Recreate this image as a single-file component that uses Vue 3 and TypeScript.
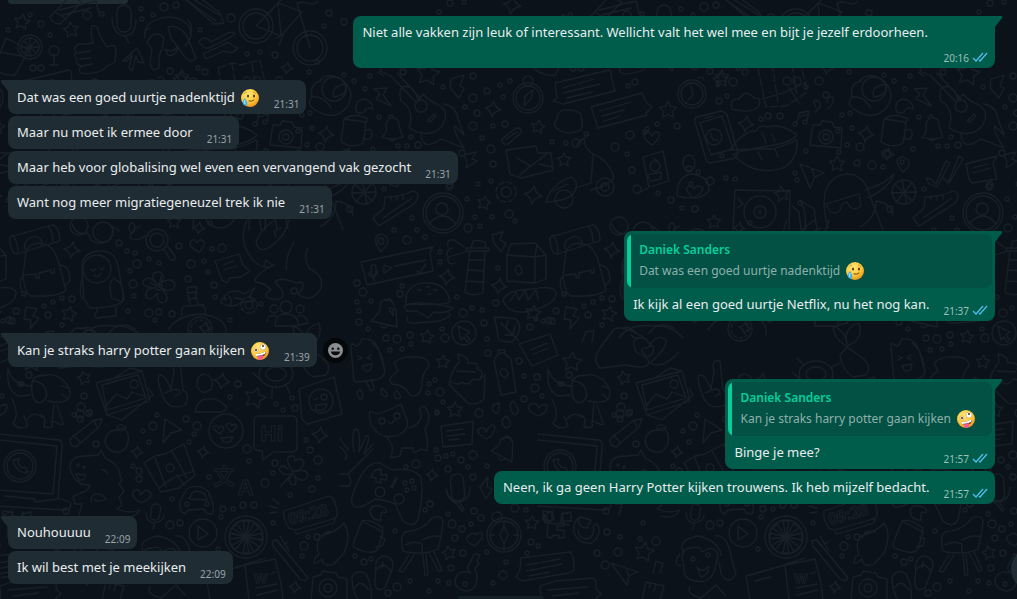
<script setup lang="ts">
type EmojiName = 'tear' | 'zany'

interface Quote {
  author: string
  text: string
  emoji: EmojiName
}

interface Message {
  id: number
  text: string
  time: string
  emoji?: EmojiName
  quote?: Quote
  reactable?: boolean
  stacked?: boolean
}

interface Group {
  id: number
  own: boolean
  messages: Message[]
}

const groups: Group[] = [
  {
    id: 1,
    own: true,
    messages: [
      { id: 1, text: 'Niet alle vakken zijn leuk of interessant. Wellicht valt het wel mee en bijt je jezelf erdoorheen.', time: '20:16', stacked: true },
    ],
  },
  {
    id: 2,
    own: false,
    messages: [
      { id: 2, text: 'Dat was een goed uurtje nadenktijd', emoji: 'tear', time: '21:31' },
      { id: 3, text: 'Maar nu moet ik ermee door', time: '21:31' },
      { id: 4, text: 'Maar heb voor globalising wel even een vervangend vak gezocht', time: '21:31' },
      { id: 5, text: 'Want nog meer migratiegeneuzel trek ik nie', time: '21:31' },
    ],
  },
  {
    id: 3,
    own: true,
    messages: [
      {
        id: 6,
        text: 'Ik kijk al een goed uurtje Netflix, nu het nog kan.',
        time: '21:37',
        quote: { author: 'Daniek Sanders', text: 'Dat was een goed uurtje nadenktijd', emoji: 'tear' },
      },
    ],
  },
  {
    id: 4,
    own: false,
    messages: [
      { id: 7, text: 'Kan je straks harry potter gaan kijken', emoji: 'zany', time: '21:39', reactable: true },
    ],
  },
  {
    id: 5,
    own: true,
    messages: [
      {
        id: 8,
        text: 'Binge je mee?',
        time: '21:57',
        quote: { author: 'Daniek Sanders', text: 'Kan je straks harry potter gaan kijken', emoji: 'zany' },
      },
      { id: 9, text: 'Neen, ik ga geen Harry Potter kijken trouwens. Ik heb mijzelf bedacht.', time: '21:57' },
    ],
  },
  {
    id: 6,
    own: false,
    messages: [
      { id: 10, text: 'Nouhouuuu', time: '22:09' },
      { id: 11, text: 'Ik wil best met je meekijken', time: '22:09' },
    ],
  },
]

// Wallpaper marks: [x, y, radius]
const dots: number[][] = [
  [41, 24, 3], [30, 15, 2], [8, 30, 2], [87, 15, 4], [50, 35, 2], [102, 14, 2], [33, 68, 3], [41, 68, 3],
  [141, 9, 2], [164, 7, 4], [153, 15, 2], [142, 19, 2], [176, 5, 3], [231, 18, 4], [170, 71, 3], [198, 68, 2],
  [205, 72, 3], [200, 30, 2], [247, 54, 2], [260, 52, 2], [275, 55, 3], [329, 13, 3], [324, 26, 2], [309, 72, 2],
  [317, 62, 2], [312, 128, 2], [320, 147, 4], [307, 145, 2], [299, 152, 2], [344, 75, 2], [354, 81, 2],
  [344, 22, 3], [370, 76, 2], [365, 89, 2], [403, 72, 3], [443, 87, 2], [473, 76, 3], [487, 91, 3], [473, 98, 4],
  [500, 85, 2], [510, 81, 2], [503, 97, 2], [465, 107, 2], [477, 113, 3], [473, 126, 4], [493, 126, 2],
  [505, 124, 3], [482, 138, 2], [491, 149, 4], [379, 117, 2], [373, 149, 2], [398, 146, 2], [407, 146, 2],
  [418, 145, 3], [411, 137, 2], [462, 153, 3], [493, 164, 3], [478, 184, 2], [491, 181, 2], [467, 199, 2],
  [449, 187, 3], [475, 217, 2], [492, 217, 2], [509, 214, 4], [450, 3, 3], [464, 2, 2], [439, 12, 2],
  [515, 221, 2], [12, 142, 2], [26, 143, 2], [36, 143, 4], [46, 134, 2], [75, 147, 4], [90, 135, 4],
  [87, 154, 2], [92, 170, 3], [97, 189, 4], [118, 193, 2], [131, 200, 3], [107, 129, 2], [117, 124, 2],
  [88, 86, 2], [95, 82, 3], [105, 132, 2], [137, 126, 3], [149, 169, 3], [158, 172, 2], [151, 184, 2],
  [170, 181, 4], [186, 178, 2], [195, 179, 2], [178, 83, 2], [193, 82, 4], [179, 101, 3], [187, 96, 2],
  [221, 119, 2], [228, 116, 3], [240, 116, 3], [257, 81, 4], [266, 87, 2], [279, 81, 4], [286, 95, 3],
  [266, 151, 2], [317, 163, 3], [332, 165, 4], [343, 167, 2], [302, 115, 2], [310, 113, 2], [346, 154, 4],
  [384, 189, 2], [350, 209, 3], [412, 218, 2], [450, 185, 3], [142, 208, 2], [155, 209, 3], [260, 203, 2],
  [255, 173, 2], [257, 180, 2], [210, 223, 2], [127, 251, 2], [135, 253, 2], [119, 243, 3], [137, 264, 4],
  [149, 259, 2], [159, 263, 2], [130, 271, 2], [133, 284, 4], [134, 296, 2], [179, 246, 3], [191, 264, 4],
  [204, 261, 2], [208, 272, 2], [212, 249, 2], [222, 248, 4], [188, 279, 3], [214, 285, 3], [215, 297, 2],
  [62, 298, 2], [72, 299, 3], [53, 302, 2], [44, 306, 2], [48, 315, 3], [62, 325, 2], [16, 311, 3], [12, 321, 3],
  [3, 321, 2], [128, 311, 2], [149, 313, 4], [159, 312, 3], [155, 320, 2], [172, 314, 3], [261, 304, 2],
  [294, 291, 3], [230, 320, 2], [20, 384, 2], [29, 375, 3], [22, 384, 2], [84, 396, 3], [81, 407, 4],
  [90, 412, 2], [74, 415, 2], [80, 419, 3], [238, 384, 3], [230, 397, 2], [276, 404, 2], [283, 410, 2],
  [295, 408, 3], [292, 398, 2], [394, 230, 2], [407, 240, 4], [417, 230, 2], [425, 237, 2], [468, 228, 4],
  [480, 226, 2], [440, 252, 2], [440, 262, 2], [357, 283, 3], [363, 292, 4], [357, 302, 2], [371, 301, 2],
  [359, 311, 2], [359, 322, 3], [368, 329, 2], [402, 286, 2], [400, 294, 3], [457, 297, 2], [463, 313, 4],
  [472, 308, 2], [482, 310, 2], [484, 323, 3], [498, 268, 2], [496, 303, 3], [386, 338, 3], [397, 339, 4],
  [410, 335, 3], [411, 344, 2], [390, 350, 2], [402, 349, 2], [442, 329, 2], [445, 338, 4], [487, 339, 2],
  [488, 353, 3], [519, 361, 3], [435, 380, 2], [429, 384, 2], [428, 393, 2], [440, 392, 4], [443, 402, 2],
  [437, 413, 2], [524, 376, 2], [537, 377, 3], [535, 388, 4], [542, 396, 2], [524, 399, 3], [479, 413, 4],
  [530, 327, 3], [536, 319, 2], [9, 320, 3], [24, 294, 2], [80, 414, 4], [89, 413, 3], [157, 415, 2],
  [143, 431, 2], [153, 426, 4], [149, 442, 2], [96, 444, 3], [186, 419, 3], [197, 426, 4], [194, 434, 2],
  [189, 442, 2], [247, 449, 4], [249, 461, 2], [306, 440, 2], [310, 450, 3], [318, 460, 4], [275, 463, 3],
  [273, 473, 2], [265, 483, 4], [312, 489, 3], [318, 478, 2], [209, 477, 2], [133, 466, 2], [139, 471, 3],
  [139, 479, 3], [172, 499, 2], [221, 517, 2], [223, 509, 3], [233, 509, 2], [243, 505, 3], [254, 505, 3],
  [290, 495, 2], [170, 525, 4], [180, 523, 3], [273, 523, 2], [218, 549, 2], [308, 537, 2], [304, 546, 4],
  [317, 537, 3], [302, 556, 2], [437, 412, 2], [436, 450, 2], [438, 458, 3], [446, 456, 2], [453, 454, 2],
  [461, 460, 3], [473, 455, 4], [448, 469, 3], [468, 467, 2], [416, 464, 4], [406, 467, 2], [487, 466, 2],
  [473, 477, 3], [430, 504, 3], [425, 510, 2], [448, 514, 2], [474, 511, 3], [481, 518, 3], [452, 524, 4],
  [462, 529, 3], [471, 524, 2], [455, 538, 3], [395, 531, 2], [463, 553, 3], [487, 552, 2], [506, 562, 2],
  [503, 575, 4], [451, 568, 3], [438, 581, 2], [449, 583, 2], [355, 556, 2], [364, 562, 3], [371, 559, 2],
  [397, 587, 4], [410, 581, 2], [429, 591, 2], [388, 593, 3], [493, 583, 2], [515, 508, 4], [526, 510, 2],
  [531, 542, 3], [538, 546, 2], [527, 553, 2], [5, 518, 2], [66, 511, 3], [67, 532, 3], [80, 537, 2],
  [78, 552, 4], [57, 553, 3], [65, 565, 4], [116, 541, 4], [100, 539, 2], [103, 523, 2],
]

// Five-pointed stars: [x, y, radius, rotation]
const stars: number[][] = [
  [22, 22, 8, 10], [71, 30, 8, -8], [182, 77, 7, 0], [428, 74, 12, 8], [538, 127, 7, 10], [24, 160, 7, 0],
  [128, 110, 9, 0], [181, 80, 8, -5], [297, 164, 8, 0], [484, 203, 7, 10], [242, 194, 8, -10], [174, 222, 7, 0],
  [69, 314, 8, 12], [84, 378, 7, -12], [443, 362, 7, 5], [427, 337, 7, 8], [455, 410, 8, 0], [32, 362, 10, 5],
  [255, 398, 11, 15], [449, 553, 7, -12], [532, 523, 7, 5], [104, 552, 10, 10], [533, 313, 8, 10],
]

// Four-pointed sparkles: [x, y, radius]
const sparkles: number[][] = [
  [287, 68, 6], [326, 134, 8], [512, 5, 9], [493, 109, 8], [533, 195, 9], [206, 124, 8], [348, 154, 6],
  [72, 250, 8], [499, 286, 8], [447, 277, 8], [222, 381, 8], [320, 435, 8], [137, 452, 6], [203, 452, 6],
  [295, 587, 6], [432, 475, 6], [205, 328, 6], [199, 228, 6],
]

const starPath = (r: number): string => {
  const points: string[] = []
  for (let i = 0; i < 10; i++) {
    const radius = i % 2 === 0 ? r : r * 0.5
    const angle = (Math.PI / 5) * i - Math.PI / 2
    points.push(`${(Math.cos(angle) * radius).toFixed(1)} ${(Math.sin(angle) * radius).toFixed(1)}`)
  }
  return `M${points.join('L')}Z`
}

const sparklePath = (r: number): string => {
  const k = r * 0.2
  return `M0 ${-r}Q${k} ${-k} ${r} 0Q${k} ${k} 0 ${r}Q${-k} ${k} ${-r} 0Q${-k} ${-k} 0 ${-r}Z`
}
</script>

<template>
  <main class="chat">
    <svg class="wallpaper" aria-hidden="true">
      <defs>
        <g id="doodles" class="doodles">
          <circle v-for="(d, i) in dots" :key="'d' + i" :cx="d[0]" :cy="d[1]" :r="d[2]" />
          <path v-for="(s, i) in stars" :key="'s' + i" :d="starPath(s[2])" :transform="`translate(${s[0]} ${s[1]}) rotate(${s[3]})`" />
          <path v-for="(s, i) in sparkles" :key="'k' + i" :d="sparklePath(s[2])" :transform="`translate(${s[0]} ${s[1]}) rotate(8)`" />

          <!-- eraser, microphone, pencil -->
          <path d="M50 17L70-4L82 2L60 24Q51 23 50 17ZM55 12L66 19" />
          <rect x="117" y="5" width="14" height="27" rx="7" /><path d="M112 18Q113 34 124 36Q136 35 136 20M125 36L129 43" />
          <path d="M184-2L214 24L224 23L219 12L192-8M189 2L216 21M193-1L219 15" />
          <!-- thumb, hidden face, arrow, wrench -->
          <path d="M76 46Q78 43 86 44L93 43Q90 31 92 26Q98 24 100 36L107 47Q116 43 116 50L115 62Q108 65 101 71Q84 76 80 72Q78 67 82 66Q74 64 77 59Q72 54 77 53Q73 49 76 46ZM79 53L90 51M79 59L91 58M82 66L92 64" />
          <path d="M145 38Q143 24 158 19Q175 13 187 24Q196 34 185 46M147 42Q155 28 164 38L162 49Q158 56 159 68Q151 73 150 62L152 50ZM168 27Q178 24 187 36Q190 44 196 58Q190 66 182 53L171 38ZM165 49Q172 54 178 46Q176 57 168 55ZM145 38Q143 30 150 28M188 20Q194 27 190 34" />
          <path d="M123 61L137 48L144 63L138 62L136 56L132 71L129 68L132 55L127 61ZM199 42Q202 36 208 39L211 42L224 35Q233 30 235 34L227 39L211 47Q205 51 199 42ZM203 54L221 46Q229 40 232 45L238 48Q232 55 224 51L206 59Z" />
          <!-- drinks -->
          <circle cx="30" cy="47" r="12" /><circle cx="30" cy="47" r="9" /><path d="M30 38V56M21 47H39M24 41L36 53M24 53L36 41M6 38L29 50L15 75Q6 77-6 69ZM-1 52L22 56M54 54V64M50 65H58" /><circle cx="54" cy="51" r="5" />
          <!-- bicycle -->
          <circle cx="256" cy="26" r="17" /><circle cx="256" cy="26" r="13" /><circle cx="310" cy="48" r="17" /><circle cx="310" cy="48" r="13" />
          <path d="M256 26L278 3L302 12L281 36ZM278 3L281 36M310 48L297 3L303 2Q315 6 318 1M257 25L281 0L274-3M277 38L283 35L279 45" />
          <!-- map and blossom -->
          <path d="M218 68L232 63L241 65L260 60L267 92L246 106L226 107ZM232 63L238 102M252 64L257 96" stroke-dasharray="8 3" /><path d="M222 99L243 93L267 82M249 88L259 103" /><circle cx="247" cy="81" r="4" />
          <path d="M319 82Q326 71 341 79Q357 91 347 107Q336 120 321 113Q304 106 312 97Q323 95 331 108M312 97Q309 84 321 81" /><circle cx="334" cy="89" r="12" /><path d="M334 97Q330 86 346 84Q348 95 334 97Z" />
          <!-- quotes, note, camera -->
          <path d="M276 107Q271 98 278 101Q284 105 275 112M288 103Q285 96 292 97Q296 101 288 109M257 123L259 113L269 111L267 121M259 117L268 114" /><circle cx="255" cy="124" r="2" /><circle cx="265" cy="122" r="2" />
          <path d="M273 125L280 125L282 121L292 122L294 127L302 128L301 148L270 145Q271 135 273 125Z" /><circle cx="286" cy="137" r="7" /><circle cx="286" cy="137" r="3" /><circle cx="298" cy="131" r="2" />
          <!-- mug, croissant, bell, bolts -->
          <path d="M344 119L365 122Q367 124 363 143Q353 149 341 142ZM344 119Q354 112 368 119L365 124M364 131Q373 126 372 136Q370 141 363 138" /><path d="M356 110Q355 99 365 99Q373 102 373 109Q366 106 364 112Q357 115 356 110Z" />
          <path d="M382 137Q388 133 386 124Q390 114 398 120Q400 131 403 137Q393 141 382 137ZM388 118Q391 112 394 118M389 139Q393 143 396 138M374 89L387 88L383 95L391 106L376 99L380 94ZM451 79L464 75L460 86L464 88L459 98L450 88ZM464 155L476 152L472 159L477 161L466 168L467 162ZM492 235L503 232L500 240L506 243L501 252L494 243ZM26 307L37 309L33 316L39 318L30 329L31 320L24 319ZM484 482L488 477L487 487L492 489L486 499L480 487Z" />
          <!-- guitar -->
          <circle cx="421" cy="106" r="6" /><path d="M416 102L391 76M421 99L397 73M391 76L380 71L381 66L387 63M384 76L378 72M418 100Q414 84 403 87Q398 90 401 101Q415 109 409 128Q430 140 442 126Q451 111 437 104Q429 101 423 94ZM427 121L434 114L436 116L430 122ZM444 104Q456 106 458 119L464 135L455 126Q452 130 464 148L441 139Q422 152 421 134" />
          <!-- compass, blob, clip -->
          <circle cx="528" cy="98" r="15" /><circle cx="528" cy="98" r="12" /><circle cx="528" cy="81" r="5" /><path d="M524 106L525 96L533 90L531 99Z" />
          <path d="M17 119Q17 109 29 110Q43 111 41 118Q46 132 33 132Q28 135 19 130Q11 125 17 119ZM502 139L516 128Q523 128 521 133L508 144Q501 145 502 139ZM506 139L517 132" />
          <!-- chat bubbles -->
          <path d="M15 83L69 70Q72 71 71 76L75 91L23 104L13 101L17 98ZM23 88L54 79M23 93L60 84M27 98L52 92M51 107L102 93L106 102L112 107L106 113L107 115L58 128ZM60 111L91 102M62 116L84 110M64 121L80 116" />
          <path d="M59 10L96 1L99 14M62 15L91 8M506 150L536 146L538 153L551 153L553 170L521 178L510 174ZM517 158L531 166L548 153M520 175L530 166M552 167L539 164" />
          <!-- heart, passport -->
          <path d="M112 145Q101 138 105 133Q109 130 112 136Q114 130 119 133Q121 138 112 145ZM103 157L123 151L129 181L109 187ZM107 175L121 172V179L111 181Z" /><circle cx="115" cy="166" r="5" /><path d="M113 158L118 161M97 194L108 188" />
          <!-- scooter, gears -->
          <path d="M6 202Q11 184 31 177Q40 182 34 193Q27 201 6 202ZM13 191L28 184M35 188L51 183L53 154Q44 148 44 138L37 145M38 142L50 134M53 154Q69 160 74 178Q66 187 51 190" /><circle cx="24" cy="199" r="9" /><circle cx="65" cy="187" r="9" /><circle cx="65" cy="187" r="4" />
          <circle cx="506" cy="192" r="10" stroke-dasharray="5 3" /><circle cx="506" cy="192" r="5" /><circle cx="249" cy="305" r="8" stroke-dasharray="4 2" /><circle cx="249" cy="305" r="4" />
          <!-- ball, shoe, avatar -->
          <circle cx="364" cy="192" r="12" /><path d="M355 184L372 201M372 183L356 202M362 180L367 204M376 192L352 193M373 218L384 208L385 197Q400 197 413 191Q423 194 414 204L379 226ZM383 218L412 198M391 200V196M397 200V196M403 199V195" />
          <circle cx="443" cy="213" r="20" /><circle cx="443" cy="213" r="17" /><circle cx="442" cy="209" r="6" /><path d="M429 224Q443 208 456 224" />
          <!-- watch, cloud, phone, lips -->
          <circle cx="152" cy="94" r="14" /><circle cx="152" cy="94" r="11" /><path d="M151 86L153 95L148 100M158 78Q163 75 164 80" />
          <path d="M192 109Q189 98 199 99Q206 88 214 98Q223 98 218 107Q210 114 192 109ZM157 117L181 111Q187 112 188 118L198 153Q197 158 191 159L170 163Q166 162 165 156L155 122Q154 118 157 117ZM160 123L182 116L193 149L171 155ZM165 118L173 116" /><circle cx="174" cy="137" r="8" /><circle cx="182" cy="156" r="2" /><path d="M171 133Q171 141 178 140" />
          <path d="M190 150Q204 130 216 131Q220 124 227 127Q242 123 257 135Q252 142 234 145L212 149ZM193 154Q208 148 232 149Q249 144 257 140Q258 160 243 168Q213 177 193 154M222 132L226 143M232 134L235 142M218 152L222 160M235 149L238 157" />
          <!-- plane, pin, ticks, card -->
          <path d="M260 164L284 173L275 177L270 188ZM271 168L275 177M363 172Q351 158 363 157Q375 162 363 172ZM386 178L391 179L396 184L406 161L410 163L397 187L389 184ZM403 178L408 183L419 156L423 159L409 183" /><circle cx="362" cy="162" r="2" />
          <path d="M426 164L457 156L453 163L457 179L432 183L429 179ZM433 168L447 164M433 173L450 168" />
          <!-- hooded friend, turntable, heart badge -->
          <path d="M288 228Q276 183 301 175Q323 170 330 196L343 230M325 190Q345 184 354 174Q350 187 328 198M286 204L319 194L321 206Q312 213 307 202L302 204Q300 216 290 212ZM265 230Q267 211 260 200L274 209L277 230M320 227Q336 218 336 201Q351 203 353 215" />
          <path d="M193 230L195 190L250 191L249 230M252 206L259 212L261 230M198 198L203 204L197 208" /><circle cx="220" cy="212" r="16" /><circle cx="220" cy="212" r="6" /><circle cx="220" cy="212" r="1" />
          <path d="M137 194Q138 174 153 174Q170 177 169 191Q160 202 137 196ZM153 198Q143 188 148 187Q151 184 154 189Q157 184 163 188Q162 194 153 198" /><ellipse cx="149" cy="163" rx="6" ry="8" />
          <!-- rolled mat, backpack, magnifier -->
          <path d="M10 237L52 225Q58 225 60 238Q60 242 56 242L17 254Q10 253 10 237ZM12 235Q17 238 18 252M48 226Q53 232 53 242M25 249Q22 240 35 236Q44 239 41 245M26 251Q31 240 48 245Q57 251 60 268L66 290Q60 297 31 296Q25 294 23 276ZM25 275L36 274V278H39V273L51 270V273H54V268M60 265Q70 266 70 281L65 286M23 276Q18 281 22 292L28 294" />
          <circle cx="157" cy="240" r="11" /><circle cx="157" cy="240" r="7" /><path d="M164 250L171 260Q176 261 175 256L168 247M72 224Q76 236 88 233Q90 244 103 243Q115 240 112 226L119 231M140 226Q131 230 130 238Q138 242 145 236" /><circle cx="79" cy="226" r="9" /><circle cx="103" cy="232" r="10" /><ellipse cx="132" cy="228" rx="3" ry="5" />
          <!-- penguin, flower, heart -->
          <path d="M82 272Q80 253 98 251Q115 250 118 266L124 299Q120 308 90 308L84 299ZM83 278Q78 287 82 299M114 278Q107 283 112 298L122 302Q125 296 121 284ZM97 308V312Q93 314 96 318L116 316V307M91 269Q94 273 96 268M100 268Q102 272 104 267M94 275Q98 279 101 273" /><circle cx="97" cy="269" r="14" />
          <path d="M156 283Q148 272 160 272Q166 276 161 283Q172 276 175 285Q174 292 163 290Q170 298 165 302Q157 305 157 293Q151 302 146 297Q145 288 154 288Q139 286 144 280Q150 275 156 283ZM159 287L150 283M159 287L161 276M159 287L168 291" /><circle cx="159" cy="287" r="3" /><path d="M199 252Q187 246 191 241Q195 238 197 243Q201 237 204 242Q205 247 199 252Z" />
          <!-- note card, fish, snake -->
          <path d="M215 261L239 254L243 265L250 271L241 277L230 278L227 283L222 280ZM223 265L234 261M224 270L237 266M220 302Q231 285 244 294L255 288L249 297L255 301L242 302Q231 310 220 302ZM229 296Q233 301 230 305M235 298L242 299" /><circle cx="225" cy="299" r="1" />
          <path d="M247 220Q239 238 248 253Q260 273 274 265Q254 275 255 282Q266 283 271 290Q260 296 271 299Q286 302 282 290L275 282Q281 276 296 283Q306 280 302 289L298 294Q310 304 320 290Q326 277 310 269Q302 258 308 248M256 242Q261 228 275 220M256 242Q259 254 270 247Q285 237 289 220M264 266L266 260L272 265M276 237L274 231L281 228M286 270Q286 254 294 242" />
          <!-- submarine, people -->
          <path d="M168 330Q177 315 201 314Q229 318 226 335M182 316Q180 305 188 306L203 305Q207 311 205 314M190 305L187 289Q188 286 197 287V293L195 295L198 304M188 293L196 292M189 299L197 298M79 338Q90 323 114 326Q132 325 143 338" /><circle cx="200" cy="329" r="12" /><circle cx="200" cy="329" r="9" stroke-dasharray="3 3" />
          <circle cx="286" cy="307" r="6" /><circle cx="274" cy="309" r="4" /><circle cx="300" cy="309" r="4" /><path d="M275 326Q275 314 286 314Q299 315 298 326ZM267 321Q268 314 276 316M298 316Q306 314 308 323L299 325" />
          <!-- voice note, lighthouse, carton -->
          <path d="M361 262L433 247L430 253L433 271L367 285ZM384 265L384 273L392 268ZM395 266L426 260M368 273Q374 282 378 271M374 277V281M417 271L420 273L424 266M422 270L426 264M381 252Q370 237 381 234Q395 238 381 252Z" /><circle cx="381" cy="241" r="3" /><rect x="371" y="265" width="5" height="10" rx="2" />
          <path d="M470 251L465 292Q473 297 483 293L485 252M468 270L484 271M470 260L485 260M467 281L483 282M466 251H489V248H466ZM471 248L473 241Q479 239 486 243L485 248M455 263Q447 266 448 257Q458 254 465 252M447 256Q446 249 453 248M448 247Q446 239 454 240L464 247" />
          <path d="M507 255L511 244L535 243L546 255V279L535 283L507 281ZM507 255L535 257V282M535 257L537 245M535 257L546 255M519 275Q511 269 519 265Q525 272 519 275Z" />
          <!-- bell, burger, bread, leaf, cursor -->
          <path d="M371 321Q383 310 380 303Q387 296 393 303L396 311L397 327ZM386 301Q389 295 393 303M381 326Q385 330 388 325M391 312Q386 305 393 309V316ZM406 296Q411 282 428 283Q447 283 450 302Q440 306 406 304ZM404 306Q417 299 453 308Q447 314 434 312L428 318L417 311H407ZM408 316Q404 324 416 323L439 321Q454 316 449 313M418 290H421M426 287H429M434 290H437M428 294H431" />
          <path d="M503 301Q505 290 532 289Q553 285 556 292Q557 302 540 308Q511 319 503 301ZM510 301L516 292L519 300L525 290L528 300L536 290L538 299M494 317Q505 317 516 319Q525 329 512 342Q499 342 498 338Q497 326 494 317ZM501 323L519 341M506 329L508 321M513 335L505 335M513 334L515 326" />
          <circle cx="464" cy="333" r="12" /><path d="M458 326L470 332L466 335L470 340L467 342L464 337L461 340Z" />
          <!-- card, notes, heart hands -->
          <path d="M519 344L550 334L558 355L532 366ZM531 350L547 343M533 354L549 348M42 342L46 332L54 331L52 342M60 368Q52 360 60 348L74 329Q84 325 103 337Q95 340 91 335M60 368Q77 366 86 365Q108 370 109 362Q107 356 97 353Q90 341 98 338Q106 336 110 345Q117 333 126 340Q127 348 110 363Q123 370 139 352M83 329Q88 324 96 333M109 333Q120 319 135 329M107 357Q97 347 107 348Q117 342 112 354Z" />
          <!-- ice lolly, splat, cupcake, bottle -->
          <path d="M354 381L351 348Q350 342 355 345Q358 349 362 339Q376 337 380 354L385 371Q384 379 374 380L357 382ZM366 380L370 390Q374 391 374 388L371 379M358 356L362 358L358 360M371 355L367 358L371 359M362 366L372 364Q371 374 364 370ZM372 343Q381 349 384 365" />
          <path d="M394 363Q402 356 412 357Q429 356 429 366Q421 375 422 386Q419 399 410 395Q405 385 392 384Q386 379 398 371ZM449 384Q451 371 459 362L458 354Q468 356 468 363Q480 362 477 369Q486 371 479 380L485 375L484 399Q477 406 468 403Q457 393 449 384ZM451 382Q459 386 462 382Q468 387 473 379L479 380M457 371L475 372M494 361Q497 352 504 353L511 359L516 392L501 395ZM498 353V350L505 350V354M505 378Q496 373 503 368Q512 373 505 378Z" />
          <!-- dog, photo, peace sign, person, ring -->
          <path d="M8 369Q6 392 19 396L30 395M8 369Q13 385 31 386M32 382Q33 375 47 375Q53 373 63 380Q74 391 68 399Q63 404 48 401M32 382Q36 379 44 386Q51 399 39 403Q30 400 32 382ZM62 386L68 388M62 394L67 398M12 399Q20 415 13 423Q19 431 28 426L24 416M41 415Q47 417 44 427Q55 429 52 423L54 404M27 419Q34 411 42 417M53 421Q65 427 63 423L57 405" />
          <path d="M96 383L142 371L150 401L107 415ZM102 385L138 375L146 398L107 410ZM106 406L116 394L127 399L132 392L146 397M113 379L130 368L142 371M149 389L153 395L122 420L108 415" /><circle cx="134" cy="384" r="4" />
          <path d="M162 394Q155 376 161 375Q165 375 171 389L174 372Q171 358 180 361L183 390Q191 395 185 405Q168 412 162 394ZM165 393Q180 385 180 394L175 396M195 412Q198 398 209 399Q216 397 226 406Q228 410 221 412ZM197 385Q197 374 205 374Q215 377 211 389Q201 397 197 385Z" />
          <ellipse cx="276" cy="374" rx="17" ry="13" /><ellipse cx="276" cy="374" rx="10" ry="7" /><path d="M260 379L253 373M264 365L257 358M292 367L300 363M286 385L290 394M272 387V398" />
          <path d="M299 389L334 377L342 414L307 424L302 419ZM300 355Q302 370 313 377L326 375Q333 365 321 357L307 347ZM306 346Q293 338 293 326Q306 331 307 344Q303 328 319 323Q324 340 307 346" /><circle cx="321" cy="401" r="12" /><path d="M314 400L318 398M316 405L327 404Q326 412 316 410Z" /><circle cx="324" cy="397" r="3" />
          <!-- pencil, apple, laptop, dinosaur -->
          <path d="M70 439L94 420L102 419L99 427L76 447Q69 446 70 439ZM73 435L80 442M94 420L97 427M118 430Q124 425 128 434Q130 449 119 452Q108 453 105 442Q106 430 118 430ZM117 430Q117 421 126 427Q124 432 118 430" />
          <path d="M-2 434L59 440Q63 441 62 448L58 498L70 502Q73 509 64 510L-2 506M-2 440L57 446L53 494L-2 490M5 496L35 499V502L58 499M12 511L4 515L5 523L14 519ZM23 512L20 523L29 525" /><circle cx="20" cy="466" r="16" /><circle cx="20" cy="466" r="13" /><path d="M13 460Q17 475 28 472L25 467L22 468L18 463L19 459Z" />
          <path d="M70 468Q69 456 86 456L98 455L101 450L105 458Q120 465 120 476L122 480L119 484L124 491L119 497L122 505L117 509Q130 514 140 510Q134 520 121 516M70 468Q72 478 81 484L90 485Q88 492 80 493L73 497L75 504L82 504L79 515M91 502Q91 491 102 495L106 499Q97 503 94 499M76 474L86 475Q85 481 79 480ZM102 470Q106 469 107 473" /><circle cx="78" cy="465" r="1" /><circle cx="84" cy="467" r="1" />
          <!-- small plane, folded map, heart eyes, greeting bubble -->
          <path d="M165 419L182 430L171 433L163 443ZM144 463L155 456L165 454L184 444L195 475L179 488L161 492ZM155 458L166 487M172 451L187 478M159 488L173 478L194 471M177 475L184 485" /><circle cx="170" cy="468" r="4" />
          <circle cx="226" cy="431" r="17" /><path d="M220 434Q211 428 214 426Q217 424 219 428Q223 424 224 429ZM232 432Q224 426 227 424Q230 422 232 426Q235 422 237 426ZM221 438L233 437Q230 445 224 442ZM257 416H293Q297 417 297 421V448Q296 452 292 452H273L263 460L262 451L256 450Q253 448 254 444V420Q254 417 257 416Z" />
          <text x="260" y="441" class="outlined">Hi</text>
          <!-- translate card, clover, car -->
          <text x="213" y="484" class="outlined">文</text><text x="238" y="495" class="outlined">A</text>
          <path d="M293 472Q284 459 290 456Q295 455 295 461Q302 456 304 463Q302 471 293 472Q308 468 308 476Q303 485 294 475Q299 486 292 485Q286 480 293 473Q282 477 279 469Q282 463 288 469M293 473L280 487" />
          <path d="M180 501L187 489Q197 483 208 491L212 501Q215 509 212 514L206 513L204 509L188 510L185 514Q179 513 180 501ZM189 499L192 493Q198 489 205 494L207 500ZM141 503Q128 495 135 490Q140 489 141 495Q146 486 151 494Q151 499 141 503Z" /><circle cx="187" cy="504" r="2" /><circle cx="207" cy="504" r="2" />
          <!-- small microphone, play, orange, clock -->
          <rect x="151" y="504" width="9" height="16" rx="4" transform="rotate(8 155 512)" /><path d="M146 513Q147 523 154 523Q163 522 164 515M154 524L153 529" />
          <circle cx="203" cy="533" r="14" /><path d="M198 526L198 540L208 534Z" /><circle cx="246" cy="537" r="21" /><circle cx="246" cy="537" r="17" /><path d="M246 537L243 521L249 521ZM246 537L254 523L259 528ZM246 537L262 533V540ZM246 537L259 547L254 552ZM246 537L249 553L243 553ZM246 537L235 550L231 546ZM246 537L230 539V533ZM246 537L232 528L237 524Z" />
          <path d="M284 511L329 496Q334 496 337 510Q338 518 333 519L295 530L289 528Q282 517 284 511ZM295 532L297 534L334 523L335 519M273 499L279 504M269 506L277 508M270 513L277 512" />
          <text x="290" y="525" class="outlined digits" transform="rotate(-15 290 525)">09:28</text>
          <!-- toothbrush, monkey, journal, teapot -->
          <path d="M272 541L277 540L308 578L305 581L300 579L273 546ZM276 539L281 546M280 536L289 551M284 544L288 542M320 536Q335 533 344 523Q352 535 344 553L334 564Q323 568 322 559Q310 569 316 556L319 555Q315 545 320 536ZM322 538Q325 529 335 532" />
          <path d="M144 553Q136 540 158 536Q178 540 181 555M144 566Q138 548 152 548Q160 545 162 552Q175 543 178 556L174 572Q168 584 157 581Q142 580 144 566M140 554Q132 565 141 566M176 536Q188 534 192 561L196 574Q188 587 181 573L179 562M157 567Q162 574 169 566Q168 576 161 577ZM150 587Q146 594 161 598L176 585L185 595" /><circle cx="153" cy="559" r="2" /><circle cx="168" cy="555" r="2" />
          <path d="M210 600L206 576L245 565L275 559L281 583L283 600M245 565L249 600M270 574L275 572M215 581L231 577M256 588L277 584M257 595L278 590M240 566L265 558" />
          <text x="254" y="583" class="outlined digits">w</text>
          <path d="M313 577L321 575L323 571L336 573L338 577L347 579V600H311Z" /><circle cx="328" cy="588" r="9" /><circle cx="328" cy="588" r="4" />
          <!-- cat, card, drops, hearts -->
          <path d="M372 426Q368 418 370 411L377 414L389 410L401 404L405 415Q412 428 400 434Q382 442 372 426ZM386 436L392 445Q393 456 390 458L400 456L402 448L413 448Q412 456 421 449L427 451Q429 444 425 429Q433 415 424 406Q417 408 421 413Q422 424 409 428M388 422L391 424L395 420" /><circle cx="382" cy="421" r="3" /><circle cx="397" cy="416" r="3" />
          <path d="M441 426L470 422L473 421L472 444L443 447ZM447 431L463 429M447 436L465 434M449 440L459 439M487 439Q474 433 480 428Q486 427 486 432Q492 421 495 427Q494 435 487 439ZM495 413Q488 406 499 403Q500 415 495 413ZM514 415Q507 405 513 401Q523 412 514 415ZM506 428Q498 422 506 416Q515 426 506 428ZM538 416Q523 409 531 404Q538 402 538 408Q547 401 547 408Q545 414 538 416ZM360 399Q354 393 360 389Q366 399 360 399ZM385 397Q379 393 382 388Q391 396 385 397ZM397 399Q391 394 397 391Q404 399 397 399Z" />
          <path d="M491 451Q501 445 501 439Q508 434 513 442Q512 454 512 462ZM503 439Q508 433 512 440M498 457Q501 462 505 459" />
          <!-- hand, game controller, big microphone -->
          <path d="M340 447Q350 455 345 460M340 474H348Q353 482 349 486H340M348 474L373 449M348 450L340 438M354 452Q351 430 356 429Q361 430 359 452L366 436Q370 434 368 442L364 454L373 444" />
          <path d="M356 486Q366 462 379 463Q386 466 392 470Q413 467 421 477Q424 497 418 519Q414 529 403 521L395 504Q387 500 375 499Q363 508 355 507Q348 503 356 486ZM375 470L381 469V475L387 475L386 480L380 479L381 483L376 482V478L371 477L373 473ZM397 478L393 487L391 487L395 479Z" /><circle cx="380" cy="492" r="5" /><circle cx="399" cy="499" r="5" /><circle cx="405" cy="483" r="2" /><circle cx="412" cy="481" r="2" /><circle cx="407" cy="490" r="2" /><circle cx="414" cy="488" r="2" />
          <rect x="451" y="474" width="13" height="27" rx="6" transform="rotate(-5 457 487)" /><path d="M446 488Q449 502 459 502Q470 500 470 487M446 488Q447 500 457 504L463 512M460 503L464 510" />
          <!-- mug, chair, compass, heart, key -->
          <path d="M362 521L383 532L378 549Q373 556 355 548Q352 546 354 541ZM362 521Q370 518 383 528L382 533M380 537Q388 537 382 546L376 547M370 512Q371 502 385 508Q389 514 383 512Q380 512 381 520Q372 521 370 512Z" />
          <path d="M403 551Q399 537 405 532Q424 530 432 518Q442 514 443 522Q442 536 438 549Q426 555 406 552ZM405 545Q414 540 422 544V552M422 540Q433 534 441 537M409 555L399 571L403 572L414 555M423 554L425 576L428 575L426 554M429 553L439 572L442 570L434 552" />
          <circle cx="504" cy="535" r="17" /><circle cx="504" cy="535" r="14" /><circle cx="497" cy="517" r="5" /><path d="M504 526L500 535L504 544L508 535ZM504 522V525M504 545V549M491 535H494M514 535H518M475 546Q463 541 468 536Q475 531 476 535Q483 528 482 538Z" />
          <path d="M471 573Q465 569 470 563L474 554L480 555L477 561L479 564L475 568L477 576Q477 590 467 591Q455 590 455 580Q458 569 471 573Z" /><circle cx="465" cy="584" r="2" />
          <!-- flip flops, bubbles, notebook -->
          <path d="M376 563Q379 554 388 557Q396 561 391 572L385 588Q375 593 375 582ZM377 569Q384 560 391 572M383 562L382 568M352 577Q358 568 366 574Q373 587 371 600M352 577Q352 591 358 600M355 588Q360 578 369 590" />
          <path d="M521 558L570 552Q574 554 574 570L569 573L522 581L516 577L520 570ZM527 565L560 559M527 571L562 564M529 576L549 572M540 586L556 581L593 578Q597 580 596 589L601 594L594 600H541ZM548 590L587 587M553 596L578 593" />
          <path d="M3 511L12 512V521L3 520ZM22 514L31 512V521L23 521ZM8 523L17 524L23 522L24 526H17V530H24V538H19V535L12 536V538L7 537Z" />
          <path d="M40 517L51 520L47 528L42 527Q36 523 40 517Q32 522 34 533Q39 545 52 543Q63 534 57 524L53 526Q56 534 48 539Q38 539 38 530M71 563L98 572L89 576L87 585ZM86 568L89 576M106 582L124 586L120 600M106 582L102 600M109 588L111 583M114 591L116 584M113 573L116 561L123 563L120 573" />
        </g>
        <pattern id="wall" width="540" height="600" patternUnits="userSpaceOnUse">
          <use href="#doodles" x="-540" />
          <use href="#doodles" />
          <use href="#doodles" x="540" />
        </pattern>
        <radialGradient id="skin" cx="40%" cy="30%" r="75%">
          <stop offset="0" stop-color="#ffe878" />
          <stop offset="0.6" stop-color="#fdc83a" />
          <stop offset="1" stop-color="#e98b1c" />
        </radialGradient>
        <symbol id="emoji-tear" viewBox="0 0 20 20">
          <circle cx="10" cy="10" r="9" fill="url(#skin)" />
          <path d="M4 6Q5 4 7 4M13 4Q15 4 16 6" fill="none" stroke="#d69a2c" />
          <ellipse cx="8" cy="8" rx="1" ry="1.6" fill="#583414" />
          <ellipse cx="14" cy="8" rx="1" ry="1.6" fill="#583414" />
          <path d="M9 13Q12 14 14 12" fill="none" stroke="#754010" stroke-linecap="round" />
          <path d="M5 10Q8 14 7 17Q5 19 3 16Q2 13 5 10Z" fill="#43afe5" />
          <path d="M5 12Q4 14 5 16" fill="none" stroke="#b7e9fa" />
        </symbol>
        <symbol id="emoji-zany" viewBox="0 0 20 20">
          <circle cx="10" cy="10" r="9" fill="url(#skin)" />
          <circle cx="13" cy="6" r="3" fill="#fff" stroke="#c78d34" stroke-width=".5" />
          <circle cx="13" cy="5" r="1" fill="#4a2c14" />
          <circle cx="6" cy="9" r="2" fill="#fff" stroke="#c78d34" stroke-width=".5" />
          <circle cx="6" cy="9" r="1" fill="#4a2c14" />
          <path d="M5 13Q12 13 16 10Q16 16 10 16Q6 16 5 13Z" fill="#65320e" />
          <path d="M5 13Q12 13 16 10L15 13Q10 15 6 15Z" fill="#fff" />
          <path d="M8 15L13 14L13 17Q11 20 8 18Z" fill="#f2569b" />
        </symbol>
      </defs>
      <rect width="100%" height="100%" fill="url(#wall)" />
    </svg>

    <div class="earlier" aria-hidden="true"></div>

    <section class="thread">
      <div v-for="group in groups" :key="group.id" class="group" :class="group.own ? 'own' : 'other'">
        <div v-for="(message, index) in group.messages" :key="message.id" class="row">
          <article class="bubble" :class="{ first: index === 0, quoting: message.quote, stacked: message.stacked }">
            <svg v-if="index === 0" class="tail" viewBox="0 0 8 12" aria-hidden="true">
              <path d="M0 0H6Q8 0 7 2L0 11Z" />
            </svg>
            <blockquote v-if="message.quote" class="quote">
              <span class="author">{{ message.quote.author }}</span>
              <span class="quoted">{{ message.quote.text }}<svg class="emoji"><use :href="'#emoji-' + message.quote.emoji" /></svg></span>
            </blockquote>
            <div class="body">
              <p class="text" :class="{ tall: message.emoji }">{{ message.text }}<svg v-if="message.emoji" class="emoji"><use :href="'#emoji-' + message.emoji" /></svg></p>
              <span class="meta">
                <time>{{ message.time }}</time>
                <svg v-if="group.own" class="ticks" viewBox="0 0 16 11" role="img" aria-label="Gelezen">
                  <path d="M1 6L4 9L11 1M7 8L8 9L15 1" />
                </svg>
              </span>
            </div>
          </article>
          <button v-if="message.reactable" class="react" type="button" aria-label="Reageren">
            <svg viewBox="0 0 16 16" aria-hidden="true">
              <circle cx="8" cy="8" r="8" fill="#8b8e90" />
              <circle cx="5" cy="6" r="1.3" fill="#080c0f" />
              <circle cx="11" cy="6" r="1.3" fill="#080c0f" />
              <path d="M3 9H13Q12 13 8 13Q4 13 3 9Z" fill="#080c0f" />
            </svg>
          </button>
        </div>
      </div>
    </section>

    <div class="day" aria-hidden="true"></div>
    <button class="jump" type="button" aria-label="Naar beneden"></button>
  </main>
</template>

<style>
body {
  margin: 0;
  background: #0b1219;
}
</style>

<style scoped>
.chat {
  position: relative;
  box-sizing: border-box;
  display: flex;
  flex-direction: column;
  min-height: 100vh;
  overflow: hidden;
  background: #0b1219;
  color: #e9edef;
  font-family: "Noto Sans", "Open Sans", sans-serif;
  font-size: 13px;
  line-height: 21px;
}

.wallpaper {
  position: absolute;
  inset: 0;
  width: 100%;
  height: 100%;
}

.doodles {
  fill: none;
  stroke: #172027;
  stroke-width: 1.3;
  stroke-linecap: round;
  stroke-linejoin: round;
}

.outlined {
  font-family: "Noto Sans", "Noto Sans CJK SC", sans-serif;
  font-size: 22px;
  font-weight: 700;
  stroke-width: 1;
}

.digits {
  font-size: 16px;
}

.earlier {
  width: 120px;
  height: 4px;
  margin-left: 8px;
  border-radius: 0 0 8px 8px;
  background: #202c33;
}

.thread {
  position: relative;
  display: flex;
  flex-direction: column;
  gap: 12px;
  padding: 12px 22px 12px 8px;
}

.group {
  display: flex;
  flex-direction: column;
  gap: 2px;
}

.row {
  display: flex;
  align-items: center;
  gap: 6px;
}

.own .row {
  justify-content: flex-end;
}

.bubble {
  position: relative;
  max-width: 65%;
  border-radius: 8px;
  background: #202c33;
}

.own .bubble {
  background: #005c4b;
}

.other .first {
  border-top-left-radius: 0;
}

.own .first {
  border-top-right-radius: 0;
}

.stacked {
  width: 65%;
}

.stacked .text {
  flex-basis: 100%;
}

.quoting {
  padding-top: 3px;
}

.tail {
  position: absolute;
  top: 0;
  left: 100%;
  width: 8px;
  height: 12px;
  fill: #005c4b;
}

.other .tail {
  right: 100%;
  left: auto;
  fill: #202c33;
  transform: scaleX(-1);
}

.body {
  display: flex;
  flex-wrap: wrap;
  align-items: flex-end;
  justify-content: space-between;
  gap: 4px 14px;
  padding: 6px 7px 2px 9px;
}

.text {
  margin: 0 0 4px;
}

.tall {
  line-height: 22px;
}

.emoji {
  width: 20px;
  height: 20px;
  margin: -2px 0 -1px 5px;
  vertical-align: middle;
}

.meta {
  display: flex;
  align-items: center;
  gap: 3px;
  margin-left: auto;
  color: #9aa3a8;
  font-size: 10px;
  line-height: 15px;
}

.own .meta {
  color: #9fc0b9;
}

.ticks {
  width: 16px;
  height: 11px;
  margin-bottom: 3px;
  fill: none;
  stroke: #53bdeb;
  stroke-width: 1.3;
}

.quote {
  display: flex;
  flex-direction: column;
  margin: 0 3px;
  padding: 5px 16px 7px 12px;
  border-radius: 7px;
  background: linear-gradient(to right, #06cf9c 4px, #025144 4px);
  font-size: 12px;
}

.author {
  color: #06cf9c;
  font-weight: 600;
}

.quoted {
  color: #8fb0aa;
}

.react {
  display: grid;
  place-items: center;
  width: 25px;
  height: 25px;
  padding: 0;
  border: 0;
  border-radius: 50%;
  background: #05080a;
}

.react svg {
  width: 15px;
  height: 15px;
}

.day {
  position: absolute;
  bottom: 0;
  left: 45%;
  width: 86px;
  height: 3px;
  border-radius: 8px 8px 0 0;
  background: #142028;
}

.jump {
  position: absolute;
  right: -30px;
  bottom: 10px;
  width: 36px;
  height: 40px;
  padding: 0;
  border: 0;
  border-radius: 50%;
  background: #202c33;
}
</style>
